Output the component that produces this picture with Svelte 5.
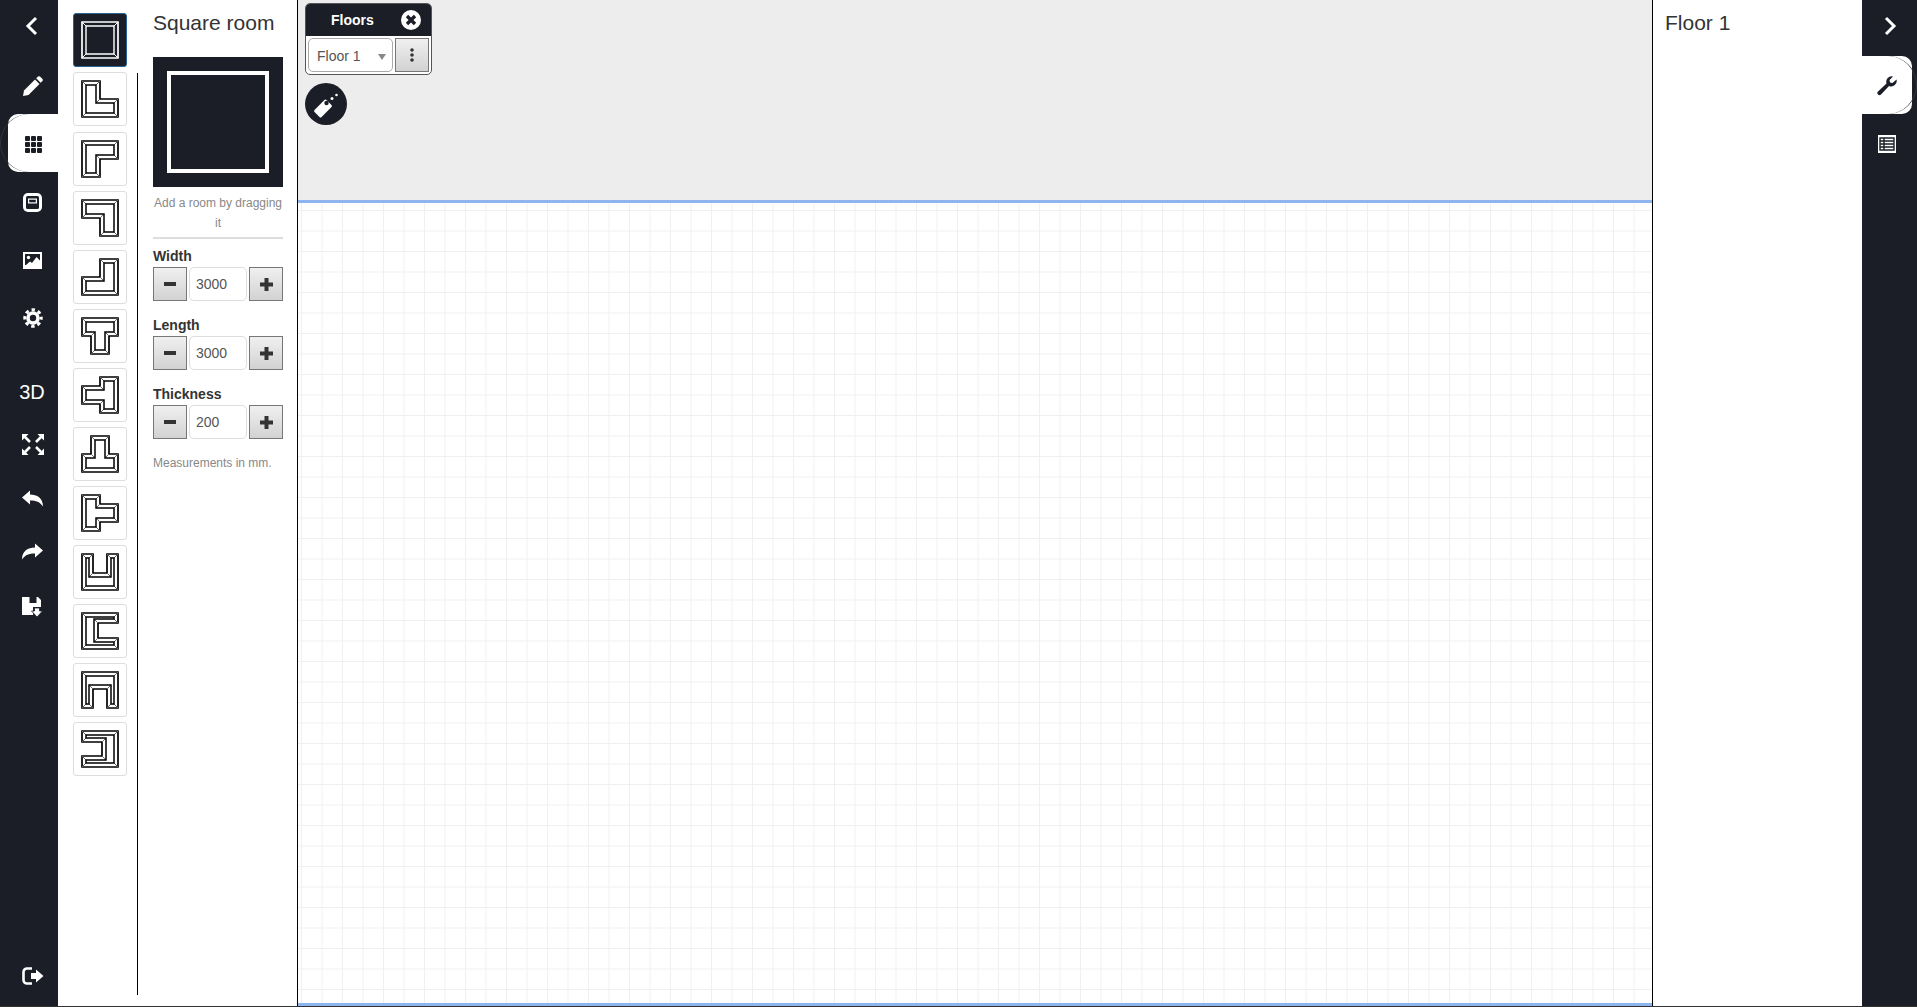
<script>
	const dark = '#1b1e27';

	// room outlines in a 36 unit box, clockwise
	const rooms = [
		[[0,0],[36,0],[36,36],[0,36]],
		[[0,0],[18,0],[18,18],[36,18],[36,36],[0,36]],
		[[0,0],[36,0],[36,18],[18,18],[18,36],[0,36]],
		[[0,0],[36,0],[36,36],[18,36],[18,18],[0,18]],
		[[18,0],[36,0],[36,36],[0,36],[0,18],[18,18]],
		[[0,0],[36,0],[36,18],[27,18],[27,36],[9,36],[9,18],[0,18]],
		[[18,0],[36,0],[36,36],[18,36],[18,27],[0,27],[0,9],[18,9]],
		[[9,0],[27,0],[27,18],[36,18],[36,36],[0,36],[0,18],[9,18]],
		[[0,0],[18,0],[18,9],[36,9],[36,27],[18,27],[18,36],[0,36]],
		[[0,0],[11,0],[11,19],[25,19],[25,0],[36,0],[36,36],[0,36]],
		[[0,0],[36,0],[36,10],[16,10],[16,25],[36,25],[36,36],[0,36]],
		[[0,0],[36,0],[36,36],[25,36],[25,17],[11,17],[11,36],[0,36]],
		[[0,0],[36,0],[36,36],[0,36],[0,25],[20,25],[20,11],[0,11]]
	];

	function inset(pts, t) {
		return pts.map((p, i) => {
			const prev = pts[(i + pts.length - 1) % pts.length];
			const next = pts[(i + 1) % pts.length];
			const a = [Math.sign(p[0] - prev[0]), Math.sign(p[1] - prev[1])];
			const b = [Math.sign(next[0] - p[0]), Math.sign(next[1] - p[1])];
			return [p[0] + t * (-a[1] - b[1]), p[1] + t * (a[0] + b[0])];
		});
	}

	const str = (pts) => pts.map((p) => p.join(',')).join(' ');
	const shapes = rooms.map((r) => ({ outer: r, inner: inset(r, 4) }));

	const fields = [
		{ label: 'Width', value: '3000' },
		{ label: 'Length', value: '3000' },
		{ label: 'Thickness', value: '200' }
	];
</script>

<div class="page">
	<nav class="bar">
		<div class="item first">
			<svg width="20" height="20" viewBox="0 0 20 20"><path d="M14 2 L6 10 L14 18" fill="none" stroke="#fff" stroke-width="3" /></svg>
		</div>
		<div class="item low">
			<svg width="20" height="20" viewBox="0 0 20 20" fill="#fff"><path d="M1 14.5 L12 3.5 L16.5 8 L5.5 19 L0 20 Z" /><path d="M13.2 2.3 L15 .5 Q16 -.2 17 .5 L19.5 3 Q20.2 4 19.5 5 L17.7 6.8 Z" /></svg>
		</div>
		<div class="item active low">
			<svg width="17" height="17" viewBox="0 0 17 17" fill={dark}>
				{#each [0, 6, 12] as y}
					{#each [0, 6, 12] as x}
						<rect {x} {y} width="5" height="5" rx="1" />
					{/each}
				{/each}
			</svg>
		</div>
		<div class="item low">
			<svg width="19" height="19" viewBox="0 0 19 19">
				<rect width="19" height="19" rx="5" fill="#fff" />
				<rect x="3" y="3" width="13" height="13" rx="1.5" fill={dark} />
				<rect x="5" y="5.5" width="9" height="5" fill="#fff" />
				<rect x="6.2" y="6.7" width="6.6" height="2.6" fill={dark} />
			</svg>
		</div>
		<div class="item low">
			<svg width="19" height="17" viewBox="0 0 19 17">
				<rect width="19" height="17" fill="#fff" />
				<rect x="2" y="2" width="15" height="11" fill={dark} />
				<circle cx="5.5" cy="5.5" r="1.7" fill="#fff" />
				<path d="M3 13 L7 9.5 L9 11 L13.5 5 L17 8.5 V15 H4 Z" fill="#fff" />
			</svg>
		</div>
		<div class="item low">
			<svg width="20" height="20" viewBox="0 0 20 20" fill="none" stroke="#fff">
				<circle cx="10" cy="10" r="5" stroke-width="3.6" />
				<circle cx="10" cy="10" r="8.2" stroke-width="3" stroke-dasharray="3.4 3.04" stroke-dashoffset="1.7" />
			</svg>
		</div>

		<div class="item tool three">3D</div>
		<div class="item tool expand">
			<svg width="22" height="21" viewBox="0 0 22 21" fill="#fff" stroke="#fff">
				<path d="M0 0 H6.5 L0 6.5 Z M22 0 V6.5 L15.5 0 Z M0 21 V14.5 L6.5 21 Z M22 21 H15.5 L22 14.5 Z" stroke-width="0" />
				<path d="M3 3 L8 8 M19 3 L14 8 M3 18 L8 13 M19 18 L14 13" stroke-width="2.6" />
			</svg>
		</div>
		<div class="item tool">
			<svg width="21" height="17" viewBox="0 0 21 17" fill="#fff"><path d="M0 7.5 L8 .5 V4.5 C15 4.5 21 8 21 16.5 C18 12 14 10.5 8 10.5 V14.5 Z" /></svg>
		</div>
		<div class="item tool">
			<svg width="21" height="17" viewBox="0 0 21 17" fill="#fff"><path d="M21 7.5 L13 .5 V4.5 C6 4.5 0 8 0 16.5 C3 12 7 10.5 13 10.5 V14.5 Z" /></svg>
		</div>
		<div class="item tool save">
			<svg width="21" height="21" viewBox="0 0 21 21" fill="#fff">
				<path d="M0 0 H16 L19 3 V10 H11 V18 H0 Z" />
				<rect x="7.5" y="0" width="7" height="6" fill={dark} />
				<path d="M12.5 11 H17.5 V14 H20.5 L15 20 L9.5 14 H12.5 Z" stroke={dark} stroke-width="0.8" />
			</svg>
		</div>

		<div class="item tool logout">
			<svg width="22" height="18" viewBox="0 0 22 18">
				<path d="M10 1.5 H5 A3.5 3.5 0 0 0 1.5 5 V13 A3.5 3.5 0 0 0 5 16.5 H10" fill="none" stroke="#fff" stroke-width="2.6" />
				<path d="M9 6 H14 V2.5 L21.5 9 L14 15.5 V12 H9 Z" fill="#fff" />
			</svg>
		</div>
	</nav>

	<section class="panel">
		<div class="tiles">
			{#each shapes as s, i}
				<button class="tile" class:selected={i === 0}>
					<svg width="38" height="38" viewBox="-1 -1 38 38">
						<polygon class="wall" points={str(s.outer)} />
						{#each s.outer as p, j}
							<line class="mitre" x1={p[0]} y1={p[1]} x2={s.inner[j][0]} y2={s.inner[j][1]} />
						{/each}
						<polygon class="wall inner" points={str(s.inner)} />
					</svg>
				</button>
			{/each}
		</div>
		<div class="divider"></div>
		<div class="form">
			<h2>Square room</h2>
			<div class="preview"><div class="square"></div></div>
			<p class="hint">Add a room by dragging it</p>
			<hr />
			{#each fields as f}
				<div class="label">{f.label}</div>
				<div class="stepper">
					<button class="btn">
						<svg width="12" height="12" viewBox="0 0 12 12"><rect y="4" width="12" height="4" fill="#333" /></svg>
					</button>
					<input value={f.value} readonly />
					<button class="btn">
						<svg width="13" height="13" viewBox="0 0 13 13"><path d="M4.5 0 H8.5 V4.5 H13 V8.5 H8.5 V13 H4.5 V8.5 H0 V4.5 H4.5 Z" fill="#333" /></svg>
					</button>
				</div>
			{/each}
			<p class="note">Measurements in mm.</p>
		</div>
	</section>

	<main class="canvas">
		<div class="top">
			<div class="floors">
				<div class="floors-head">
					<span>Floors</span>
					<svg class="close" width="20" height="20" viewBox="0 0 20 20">
						<circle cx="10" cy="10" r="10" fill="#fff" />
						<path d="M6 6 L14 14 M14 6 L6 14" stroke={dark} stroke-width="3.4" />
					</svg>
				</div>
				<div class="floors-row">
					<div class="select">Floor 1<i class="caret"></i></div>
					<button class="btn more">
						<svg width="4" height="14" viewBox="0 0 4 14" fill="#333">
							<circle cx="2" cy="2" r="1.8" /><circle cx="2" cy="7" r="1.8" /><circle cx="2" cy="12" r="1.8" />
						</svg>
					</button>
				</div>
			</div>
			<div class="round">
				<svg width="42" height="42" viewBox="0 0 42 42" fill="#fff">
					<rect x="13" y="17" width="10" height="17" rx="1.5" transform="rotate(45 18 25.5)" />
					<circle cx="21.5" cy="20" r="2.2" fill={dark} />
					<circle cx="27" cy="15.5" r="1.5" />
					<circle cx="31.5" cy="12" r="1.3" />
				</svg>
			</div>
		</div>
		<div class="grid"></div>
	</main>

	<aside class="info">
		<h2>Floor 1</h2>
	</aside>

	<nav class="bar right">
		<div class="item first">
			<svg width="20" height="20" viewBox="0 0 20 20"><path d="M6 2 L14 10 L6 18" fill="none" stroke="#fff" stroke-width="3" /></svg>
		</div>
		<div class="item active low">
			<svg width="20" height="20" viewBox="0 0 20 20" fill={dark}><path d="M19.5 3.5 A5.5 5.5 0 0 1 12 10 L4 18.5 A2.1 2.1 0 0 1 1 15.5 L9.5 7.5 A5.5 5.5 0 0 1 16 .5 L12.5 4 L13 6.5 L15.5 7 Z" /></svg>
		</div>
		<div class="item low">
			<svg width="18" height="18" viewBox="0 0 18 18">
				<rect width="18" height="18" fill="#fff" />
				<path d="M2 3 H16 V15 H2 Z M2 6 H16 M2 9 H16 M2 12 H16 M6 3 V15" fill="none" stroke={dark} stroke-width="1.4" />
			</svg>
		</div>
	</nav>
</div>

<style>
	:global(body) {
		background: #fff;
	}

	.page {
		display: flex;
		height: 1006px;
		border-bottom: 1px solid #333;
		overflow: hidden;
		font-family: 'Liberation Sans', Arial, sans-serif;
		color: #333;
	}

	.bar {
		width: 58px;
		flex: none;
		display: flex;
		flex-direction: column;
		background: #1b1e27;
	}

	.bar.right {
		width: 55px;
	}

	.item {
		height: 58px;
		flex: none;
		display: flex;
		align-items: center;
		justify-content: center;
		position: relative;
		color: #fff;
		padding-left: 8px;
		padding-right: 1px;
		box-sizing: border-box;
	}

	.first {
		height: 56px;
		padding-left: 6px;
		padding-right: 0;
		padding-bottom: 4px;
	}

	.low {
		padding-top: 2px;
	}

	.active {
		margin-left: 8px;
		padding-left: 0;
		padding-right: 0;
		background: #fff;
		border-radius: 10px 0 0 10px;
	}

	.active::before {
		content: '';
		position: absolute;
		left: -8px;
		top: 0;
		bottom: 0;
		width: 30px;
		border-left: 1px solid #33363e;
		border-radius: 30px 0 0 30px;
	}

	.right .item {
		padding-left: 0;
		padding-right: 0;
	}

	.right .active {
		margin: 0 5px 0 0;
		border-radius: 0 10px 10px 0;
	}

	.right .active::before {
		left: auto;
		right: -5px;
		border-left: none;
		border-right: 1px solid #33363e;
		border-radius: 0 30px 30px 0;
	}

	.right .item:last-child {
		margin-right: 5px;
	}

	.tool {
		height: 53.4px;
	}

	.three {
		margin-top: 19px;
		padding-top: 2px;
		padding-left: 6px;
		padding-right: 0;
		font-size: 20px;
	}

	.expand {
		padding-bottom: 2px;
	}

	.save {
		padding-top: 5px;
	}

	.logout {
		margin-top: auto;
		margin-bottom: 3px;
	}

	.panel {
		width: 240px;
		flex: none;
		display: flex;
		border-right: 1px solid #000;
		box-sizing: border-box;
	}

	.tiles {
		width: 79px;
		flex: none;
		display: flex;
		flex-direction: column;
		gap: 5.08px;
		padding: 13.4px 0 0 15px;
		box-sizing: border-box;
	}

	.tile {
		width: 54px;
		height: 54px;
		flex: none;
		display: flex;
		align-items: center;
		justify-content: center;
		padding: 0;
		background: #fff;
		border: 1px solid #ddd;
		border-radius: 3px;
	}

	.wall {
		fill: #fff;
		stroke: #000;
		stroke-width: 1.7;
	}

	.wall.inner {
		stroke-width: 1.5;
	}

	.mitre {
		stroke: #666;
		stroke-width: 1;
	}

	.selected {
		background: #1b1e27;
		border-color: #2a6496;
	}

	.selected .wall {
		fill: #1b1e27;
		stroke: #fff;
		stroke-width: 1.7;
	}

	.selected .wall.inner {
		stroke-width: 1.4;
	}

	.selected .mitre {
		stroke: #fff;
	}

	.divider {
		width: 1px;
		flex: none;
		margin: 73px 0 11px;
		background: #000;
	}

	.form {
		width: 130px;
		flex: none;
		margin-left: 15px;
	}

	h2 {
		margin: 0;
		font-size: 21px;
		font-weight: 400;
		line-height: 24px;
		padding-top: 11px;
	}

	.preview {
		height: 130px;
		margin-top: 22px;
		display: flex;
		align-items: center;
		justify-content: center;
		background: #1b1e27;
	}

	.square {
		width: 94px;
		height: 94px;
		border: 4px solid #fff;
	}

	.hint {
		margin: 6px 0 0;
		font-size: 12px;
		line-height: 20px;
		color: #888;
		text-align: center;
	}

	hr {
		height: 2px;
		margin: 4px 0 8.5px;
		border: none;
		background: #ddd;
	}

	.label {
		margin-bottom: 2.5px;
		font-size: 14px;
		font-weight: 700;
		line-height: 17px;
	}

	.stepper {
		display: flex;
		gap: 2px;
		height: 34px;
		margin-bottom: 15.5px;
	}

	.btn {
		width: 34px;
		flex: none;
		display: flex;
		align-items: center;
		justify-content: center;
		padding: 0;
		background: linear-gradient(#f0f0f0, #d2d2d2);
		border: 1px solid #777;
	}

	input {
		width: 58px;
		min-width: 0;
		flex: none;
		padding: 0 0 0 6px;
		box-sizing: border-box;
		font: 14px 'Liberation Sans', Arial, sans-serif;
		color: #555;
		background: #fff;
		border: 1px solid #ddd;
		border-radius: 5px;
		outline: none;
	}

	.note {
		margin: 2px 0 0;
		font-size: 12px;
		line-height: 16px;
		color: #888;
	}

	.canvas {
		width: 1354px;
		flex: none;
		display: flex;
		flex-direction: column;
		border-right: 1px solid #000;
	}

	.top {
		height: 197px;
		flex: none;
		padding: 3px 0 0 7px;
		background: #ededed;
		border-bottom: 3px solid #8fb5f0;
	}

	.grid {
		flex: 1;
		background-color: #fff;
		background-image: linear-gradient(90deg, #f0f0f0 1px, transparent 1px),
			linear-gradient(#f0f0f0 1px, transparent 1px);
		background-size: 20.5px 20.5px;
		background-position: 3px 7px;
		border-bottom: 3px solid #8fb5f0;
	}

	.floors {
		width: 127px;
		height: 72px;
		box-sizing: border-box;
		background: #fff;
		border: 1px solid #555;
		border-radius: 5px;
		overflow: hidden;
	}

	.floors-head {
		height: 32px;
		display: flex;
		align-items: center;
		justify-content: space-between;
		padding: 0 10px 0 25px;
		background: #1b1e27;
		color: #fff;
		font-size: 14px;
		font-weight: 700;
	}

	.floors-row {
		display: flex;
		gap: 2px;
		height: 34px;
		margin: 2px 0 0 2px;
	}

	.select {
		width: 85px;
		flex: none;
		display: flex;
		align-items: center;
		justify-content: space-between;
		padding: 2px 6px 0 8px;
		box-sizing: border-box;
		background: #fff;
		border: 1px solid #aaa;
		border-radius: 5px;
		font-size: 14px;
		color: #555;
	}

	.caret {
		border-top: 6px solid #888;
		border-left: 4.5px solid transparent;
		border-right: 4.5px solid transparent;
		margin-top: 2px;
	}

	.round {
		width: 42px;
		height: 42px;
		margin-top: 8px;
		border-radius: 50%;
		background: #1b1e27;
	}

	.info {
		flex: 1;
		padding-left: 12px;
		min-width: 0;
	}
</style>
